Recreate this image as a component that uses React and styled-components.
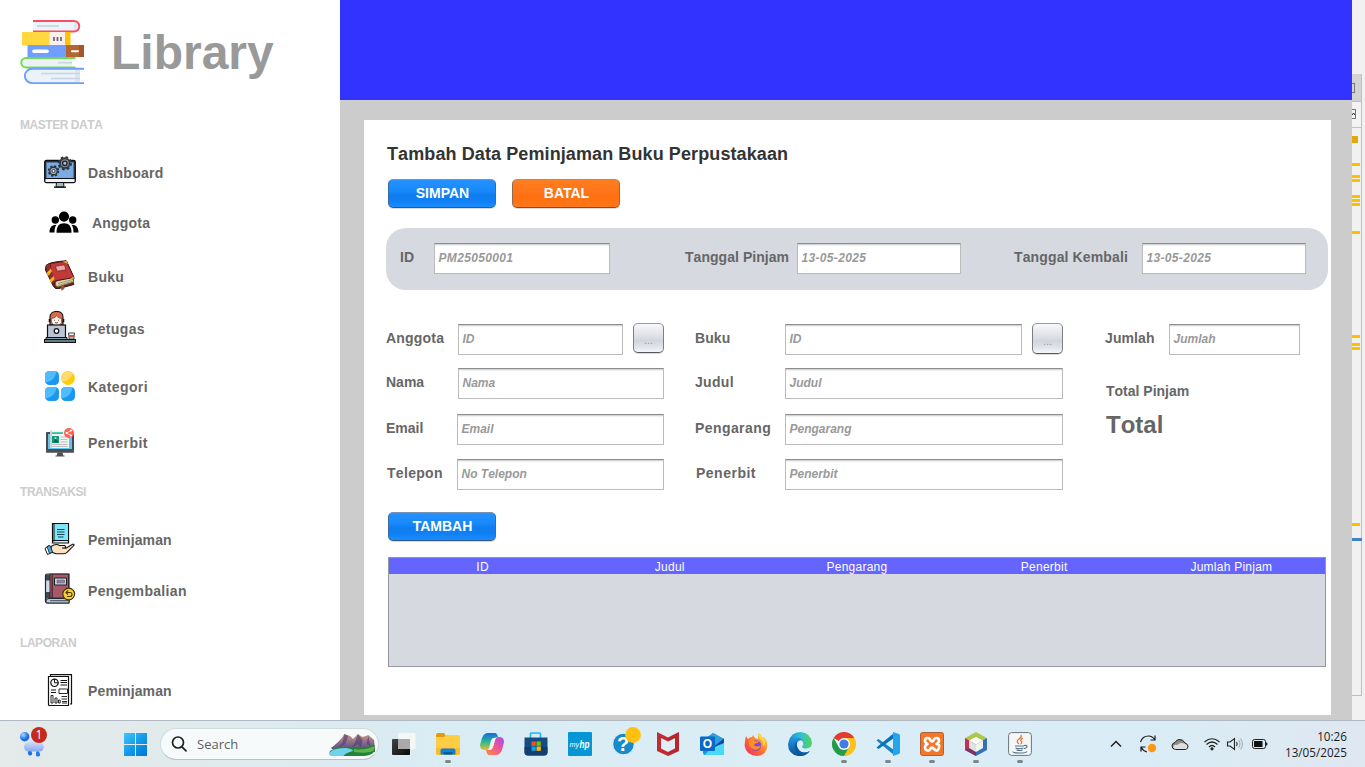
import React from "react";
import styled, { createGlobalStyle } from "styled-components";

const GlobalStyle = createGlobalStyle`
  *, *::before, *::after { box-sizing: border-box; }
  html, body { margin: 0; padding: 0; overflow: hidden; }
  body { font-family: "Liberation Sans", Arial, sans-serif; font-kerning: none; background: #fff; }
  svg { display: block; flex: none; }
`;

/* ---------- shell ---------- */

const Desktop = styled.div`
  display: flex;
  flex-direction: column;
  width: 1365px;
  height: 767px;
  overflow: hidden;
`;

const Workspace = styled.div`
  display: flex;
  height: 720px;
  overflow: hidden;
`;

/* ---------- sidebar ---------- */

const Sidebar = styled.nav`
  width: 340px;
  height: 720px;
  flex: none;
  overflow: hidden;
  padding: 20px 0 0 20px;
  background: #fff;
`;

const Brand = styled.div`
  display: flex;
  align-items: center;
  height: 64px;
  gap: 27px;
`;

const BrandName = styled.h1`
  margin: 0;
  padding-top: 2px;
  font-size: 48px;
  line-height: 64px;
  font-weight: bold;
  color: #999;
`;

const SectionLabel = styled.h2`
  margin: ${(p) => p.$top}px 0 0;
  height: 14px;
  font-size: 12px;
  line-height: 14px;
  font-weight: bold;
  letter-spacing: -0.45px;
  color: #ccc;
`;

const MenuItem = styled.a`
  display: flex;
  align-items: center;
  gap: 12px;
  height: 32px;
  margin-top: ${(p) => p.$top}px;
  padding-left: 24px;
`;

const IconSlot = styled.span`
  flex: none;
  margin-bottom: ${(p) => (p.$lift || 0) * 2}px;
`;

const MenuText = styled.span`
  font-size: 14px;
  line-height: 16px;
  font-weight: bold;
  letter-spacing: ${(p) => p.$ls}px;
  color: #666;
`;

/* ---------- main ---------- */

const Main = styled.main`
  display: flex;
  flex-direction: column;
  width: 1012px;
  flex: none;
  background: #ccc;
`;

const Banner = styled.header`
  height: 100px;
  flex: none;
  background: #33f;
`;

const Card = styled.section`
  height: 595px;
  margin: 20px 21px 5px 24px;
  padding: 24px 3px 0 22px;
  background: #fff;
`;

const Title = styled.h2`
  margin: 0 0 15px 1px;
  font-size: 18px;
  line-height: 20px;
  font-weight: bold;
  letter-spacing: 0.1px;
  color: #333;
`;

const ButtonRow = styled.div`
  display: flex;
  gap: 16px;
  padding-left: 2px;
`;

const tones = {
  blue: "linear-gradient(#2691ff 0%, #1789fb 40%, #0e7df0 55%, #0f7ff3 75%, #1a8dff 100%)",
  orange: "linear-gradient(#ff7d20 0%, #ff7519 45%, #ff7010 60%, #ff7719 100%)",
  silver: "linear-gradient(#f7f8fa 0%, #e3e5ea 35%, #d2d5dc 60%, #dfe2e8 80%, #f4f6fa 100%)",
};

const Button = styled.button`
  width: ${(p) => p.$w || 108}px;
  height: ${(p) => p.$h || 29}px;
  flex: none;
  margin: 0;
  padding: ${(p) => p.$pad || "0 0 1px 1px"};
  border: 1px solid;
  border-color: ${(p) =>
    p.$tone === "silver" ? "#9b9da3 #7b7f88 #545962" : p.$tone === "blue" ? "#7794b5 #356ca5 #315982" : "#a58f80 #96694b #665447"};
  border-radius: 5px;
  box-shadow: 0 1px 0 rgba(0, 0, 0, 0.15);
  background: ${(p) => tones[p.$tone]};
  font: bold 14px/16px "Liberation Sans", Arial, sans-serif;
  color: #fff;
`;

const LookupButton = styled(Button)`
  font-size: 11px;
  font-weight: normal;
  line-height: 12px;
  color: #a3979d;
`;

const LoanPanel = styled.div`
  display: flex;
  align-items: flex-start;
  width: 942px;
  height: 62px;
  margin-top: 20px;
  padding: 15px 0 0 14px;
  border-radius: 20px;
  background: #d6d9e0;
`;

const Label = styled.label`
  width: ${(p) => p.$w}px;
  flex: none;
  padding-left: ${(p) => p.$indent || 0}px;
  font-size: 14px;
  line-height: 28px;
  font-weight: bold;
  letter-spacing: ${(p) => p.$ls ?? 0.1}px;
  white-space: nowrap;
  color: #666;
`;

const Input = styled.div`
  width: ${(p) => p.$w}px;
  height: 31px;
  flex: none;
  margin-right: ${(p) => p.$after || 0}px;
  padding: 0 0 0 3.5px;
  border: 1px solid #bbb;
  border-top-color: #8b8c8e;
  box-shadow: inset 0 1px 0 #d5d5d5, inset 0 2px 0 #f0f0f0;
  background: #fff;
  font-size: 12px;
  line-height: 28px;
  font-weight: bold;
  font-style: italic;
  letter-spacing: ${(p) => (p.$numeric ? 0.33 : 0)}px;
  color: #999;
`;

const Form = styled.div`
  display: flex;
  height: 188px;
  margin-top: 34px;
`;

const Column = styled.div`
  width: ${(p) => p.$w}px;
  flex: none;
`;

const Row = styled.div`
  display: flex;
  align-items: flex-start;
  height: 31px;
  margin-bottom: ${(p) => p.$gap || 0}px;
`;

const LookupSlot = styled.div`
  height: 33px;
  margin: -1px 0 0 10px;
`;

const TotalLabel = styled.div`
  margin: 20px 0 0 1px;
  font-size: 14px;
  line-height: 32px;
  font-weight: bold;
  color: #666;
`;

const TotalValue = styled.div`
  margin: 1px 0 0 1px;
  font-size: 24px;
  line-height: 34px;
  font-weight: bold;
  color: #666;
`;

const Table = styled.div`
  width: 938px;
  height: 110px;
  margin: 16px 0 0 2px;
  border: 1px solid #9297a1;
  background: #d6d9e0;
`;

const TableHead = styled.div`
  display: grid;
  grid-template-columns: repeat(5, 1fr);
  height: 16px;
  background: #6464ff;
`;

const HeadCell = styled.div`
  font-size: 12px;
  line-height: 18px;
  letter-spacing: 0.25px;
  text-align: center;
  color: #fff;
`;

/* ---------- background editor edge ---------- */

const EditorEdge = styled.aside`
  width: 13px;
  flex: none;
  padding-top: 74px;
  background: #f1f1f1;
`;

const Ruler = styled.div`
  display: flex;
  flex-direction: column;
  width: 10px;
  height: 622px;
  border-right: 1px solid #bfbfbf;
  border-bottom: 1px solid #bfbfbf;
`;

const RulerCap = styled.div`
  flex: none;
  height: ${(p) => p.$h}px;
  padding-top: ${(p) => p.$pad}px;
  border-bottom: 1px solid #bfbfbf;
  background: ${(p) => p.$bg};
`;

const Knob = styled.div`
  display: flex;
  align-items: center;
  width: ${(p) => p.$w}px;
  height: 10px;
  border: 1px solid #777;
  border-left: 0;
`;

const Mark = styled.div`
  flex: none;
  width: ${(p) => p.$w || 8}px;
  height: ${(p) => p.$h || 3}px;
  margin-top: ${(p) => p.$top}px;
  background: ${(p) => p.$c || "#ffbf00"};
`;

/* ---------- taskbar ---------- */

const Taskbar = styled.footer`
  display: flex;
  height: 47px;
  flex: none;
  border-top: 1px solid #afbac4;
  background: linear-gradient(90deg, #e5eaea 0%, #e0eaec 15%, #d9ebf3 30%, #dbedf5 60%, #d9ecf5 85%, #dfe7f1 100%);
`;

const Widget = styled.div`
  width: 124px;
  padding: 5px 0 0 18px;
`;

const StartSlot = styled.div`
  width: 36px;
  padding-top: 12px;
`;

const SearchBox = styled.div`
  display: flex;
  align-items: center;
  width: 219px;
  height: 32px;
  margin: 7px 3px 0 0;
  padding-left: 10px;
  border: 1px solid #cfdadd;
  border-bottom-color: #b5c1c5;
  border-radius: 16px;
  background: #f7fafa;
  overflow: hidden;
`;

const SearchText = styled.span`
  width: 142px;
  padding-left: 10px;
  font-family: "Open Sans", "Noto Sans", sans-serif;
  font-size: 13px;
  line-height: 18px;
  color: #5c5f60;
`;

const AppSlot = styled.div`
  display: flex;
  flex-direction: column;
  align-items: center;
  width: 44px;
  padding-top: 11px;
`;

const Running = styled.div`
  width: 6px;
  height: 3px;
  margin-top: 4px;
  border-radius: 2px;
  background: #7d868b;
`;

const Tray = styled.div`
  display: flex;
  align-items: flex-start;
  flex: 1;
  padding: 11px 18px 0 62px;
`;

const TraySlot = styled.div`
  display: flex;
  justify-content: center;
  width: ${(p) => p.$w}px;
  flex: none;
`;

const Clock = styled.div`
  flex: 1;
  margin-top: -4px;
  font-family: "Open Sans", "Noto Sans", sans-serif;
  font-size: 11.7px;
  line-height: 16px;
  text-align: right;
  white-space: nowrap;
  color: #1b1b1b;
`;

/* ---------- sidebar drawings ---------- */

const BooksLogo = () => (
  <svg width="64" height="64" viewBox="0 0 64 64">
    <path d="M13 1H54a5 5 0 0 1 0 10.500H13" fill="#eef3f8" stroke="#ff4b62" strokeWidth="1.900" />
    <path d="M17 6H39" stroke="#c5d5e2" strokeWidth="1.800" />
    <path d="M54 2.500a4 4 0 0 1 0 7.500" fill="#d9e5ef" />
    <rect x="2" y="12" width="28" height="13.500" fill="#ffd840" />
    <rect x="29.500" y="12" width="16" height="13.500" fill="#fbefee" />
    <rect x="45" y="12" width="5.500" height="13.500" fill="#fcc400" />
    <path d="M34 17v4M37.500 17v4M41 17v4" stroke="#5c6578" strokeWidth="1.700" />
    <rect x="7.500" y="25" width="39" height="12" fill="#709eff" />
    <path d="M14 31.200H27" stroke="#fff" strokeWidth="3.600" strokeLinecap="round" />
    <rect x="46" y="25" width="18" height="12" fill="#b5652f" />
    <rect x="59" y="25" width="5" height="12" fill="#a3582a" />
    <path d="M52 31.200H58" stroke="#fff" strokeWidth="2" strokeLinecap="round" />
    <path d="M52 38H6a4.700 4.700 0 0 0 0 9.500H52z" fill="#edf2f7" />
    <path d="M55.500 38H6a4.700 4.700 0 0 0 0 9.500H55.500" fill="none" stroke="#6fdb50" strokeWidth="1.900" />
    <path d="M38 42.700H52" stroke="#c5d5e2" strokeWidth="1.700" />
    <path d="M60 49H12a7 7 0 0 0 0 14H60z" fill="#edf2f7" />
    <path d="M55 50h5v12h-5z" fill="#dce6ef" />
    <path d="M64 48.800H12a7.100 7.100 0 0 0 0 14.300H64" fill="none" stroke="#6f9dff" strokeWidth="1.900" />
    <path d="M21 53.500H60M31 58.500H60" stroke="#c5d5e2" strokeWidth="1.700" />
  </svg>
);

const DashboardIcon = () => (
  <svg width="32" height="32" viewBox="0 0 32 32">
    <rect x="0.700" y="4.500" width="30.600" height="22" rx="1.500" fill="#2d4352" stroke="#111" strokeWidth="1.300" />
    <rect x="2.500" y="6.500" width="27" height="15.500" fill="#7cabe4" />
    <path d="M1.500 22.500h29v3.500h-29z" fill="#edf3f7" />
    <path d="M1 22.500h30" stroke="#111" />
    <path d="M12.500 26.500h7l.500 4.500h-8z" fill="#a9bac6" stroke="#111" />
    <path d="M10 31.200h12" stroke="#111" strokeWidth="1.300" />
    <circle cx="9.500" cy="15" r="4.900" fill="#6a7c8a" stroke="#28343c" strokeWidth="1.700" strokeDasharray="2.100 1.750" />
    <circle cx="9.500" cy="15" r="3.700" fill="#a4b6c4" stroke="#28343c" strokeWidth="1.200" />
    <circle cx="9.500" cy="15" r="1.600" fill="#d2e6f4" stroke="#28343c" strokeWidth=".9" />
    <circle cx="20.800" cy="7.300" r="6.200" fill="#63717b" stroke="#28323a" strokeWidth="1.900" strokeDasharray="2.500 2.370" />
    <circle cx="20.800" cy="7.300" r="4.700" fill="#84919a" stroke="#28323a" strokeWidth="1.300" />
    <circle cx="20.800" cy="7.300" r="2.200" fill="#b4bfc7" stroke="#1c242a" strokeWidth="1.300" />
  </svg>
);

const MembersIcon = () => (
  <svg width="36" height="32" viewBox="-4 0 36 32">
    <circle cx="16" cy="9.600" r="5.100" />
    <circle cx="7.300" cy="13" r="3.700" />
    <circle cx="24.700" cy="13" r="3.700" />
    <path d="M8.500 25.800c0-6.500 2.500-9.500 7.500-9.500s7.500 3 7.500 9.500z" />
    <path d="M1.500 25.500c0-5 2-7.800 7-7.800-1.500 2-2 4.500-2 7.800zM30.500 25.500c0-5-2-7.800-7-7.800 1.500 2 2 4.500 2 7.800z" />
  </svg>
);

const BookIcon = () => (
  <svg width="32" height="32" viewBox="0 0 32 32">
    <path d="M2 5.500Q5 2 22 .800L30 18l-1 3.500.800 3L15 28.500q-4 1.500-6-3L1.500 10z" fill="#702020" stroke="#3a1515" />
    <path d="M12 21l17-4 .500 5-15.500 5q-4-1-2-6z" fill="#dcd2aa" stroke="#6e5c3a" />
    <path d="M14 23.500l15-4M14 25.500l14-4" stroke="#8c8057" strokeWidth=".7" />
    <path d="M6 3.500L22.500 1 30 17.500l-17 3q-3 0-3.500 4z" fill="#c13a3a" stroke="#4b1818" />
    <path d="M2 6q1-2 4-2l3.500 20Q6 21 2 6z" fill="#992d2d" />
    <path d="M2.500 13l4.500-4.500 1 3-4 4.500zM5.500 20l4-4 1 3-3.500 4zM18.500 1.500L22.500 1l1.700 3zM29.500 16.500l.500 2-4 .500z" fill="#f0b41d" />
    <path d="M11.500 6.300l9-1.500 1.500 5-9 1.500z" fill="#eea6a6" stroke="#702020" strokeWidth=".7" />
    <path d="M17 26l2.500-.500 1 3-3 2.500z" fill="#9c5326" />
  </svg>
);

const StaffIcon = () => (
  <svg width="32" height="32" viewBox="0 0 32 32">
    <path d="M6 14V6.500C6 2.500 8.800.500 12.500.500s6.500 2 6.500 6V14z" fill="#dc6a4e" stroke="#111" strokeWidth="1.100" />
    <path d="M7.500 7.500Q12 7 12.500 4.500 14 7.500 17.500 7.500v4q-1.500 3.500-5 3.500T7.500 11z" fill="#fff1e8" stroke="#5a3a32" strokeWidth=".6" />
    <path d="M5.500 8v3.200M19.500 8v3.200" stroke="#111" strokeWidth="1.600" />
    <path d="M10.500 8.800v.8M14.500 8.800v.8M11 11.500q1.500 1 3 0" stroke="#3a2019" strokeWidth=".8" fill="none" />
    <rect x="3.500" y="14" width="18" height="13" fill="#bac4d4" stroke="#111" strokeWidth="1.200" />
    <circle cx="12.500" cy="20" r="2.300" fill="#fff" stroke="#111" strokeWidth="1.200" />
    <path d="M2 26.500h21v2H2z" fill="#8d9cac" stroke="#111" />
    <path d="M24.500 22h6l-.700 6h-4.600z" fill="#f5f5f5" stroke="#444" />
    <path d="M25 24h5v2.500h-5z" fill="#bf5848" />
    <rect x=".500" y="28.500" width="31" height="3" fill="#5a8084" stroke="#111" />
  </svg>
);

const CategoryIcon = () => (
  <svg width="32" height="32" viewBox="0 0 32 32">
    {[[1, 0], [1, 16], [17, 16]].map(([x, y]) => (
      <g key={`${x}-${y}`} transform={`translate(${x} ${y})`}>
        <rect width="14" height="14" rx="4.500" fill="#1a98ef" />
        <path d="M4.500 0H11.500C11 5.500 7 11 .300 11.500Q0 11 0 9.500V4.500Q0 0 4.500 0z" fill="#50bbff" />
      </g>
    ))}
    <circle cx="24" cy="7" r="6.900" fill="#ffcd08" />
    <path d="M29 2.300C27 7.500 24 10 18 10.500 16 7 17.500 2 22 .400q4.500-1 7 1.900z" fill="#ffda6c" />
  </svg>
);

const PublisherIcon = () => (
  <svg width="32" height="32" viewBox="0 0 32 32">
    <rect x="2" y="5" width="28" height="20.500" rx="1" fill="#454a50" />
    <rect x="4" y="7" width="24" height="15" fill="#61c4ec" />
    <path d="M6 3.500h19V21H6z" fill="#f4f2f0" />
    <path d="M6 3.500h2V21H6z" fill="#d1d1d1" />
    <path d="M8 5.200h11v1.800H8z" fill="#35bda4" />
    <path d="M8 9h7v7H8z" fill="#0d9d80" />
    <path d="M9 15.500l2.500-3.500 3.500 3.500z" fill="#06604f" />
    <circle cx="11.500" cy="11" r="1" fill="#ffd33b" />
    <path d="M16.500 10h7M16.500 12.500h7M16.500 15h7M8 17.500h15.500M8 19.500h15.500" stroke="#bbb" strokeWidth=".9" />
    <path d="M2 22h28v3.500H2z" fill="#4c5055" />
    <path d="M13.500 25.500h5l1 4h-7zM11.500 28.500h9v1h-9z" fill="#4c5055" />
    <circle cx="25" cy="6" r="5" fill="#ff6252" />
    <path d="M27 3.500l-4.500 2.500L27 8.500" fill="none" stroke="#fff" strokeWidth=".8" />
    <path d="M27 3.500h.01M22.500 6h.01M27 8.500h.01" stroke="#fff" strokeWidth="2" strokeLinecap="round" />
  </svg>
);

const LendIcon = () => (
  <svg width="32" height="32" viewBox="0 0 32 32">
    <path d="M8.500 .600h16v19.400h-16z" fill="#cdeff5" stroke="#111" strokeWidth="1.200" />
    <path d="M10 1.200h14V17H10z" fill="#7ce7fa" />
    <path d="M10 .600v18M8.500 17.500h16" stroke="#111" />
    <path d="M13 6.500h7.500M13 9h7.500M13 11.500h7.500M14 14h5.500" stroke="#17414a" strokeWidth="1.100" />
    <path d="M7 23.500q5-3.500 8.500-1h5q2 1 .500 2.500h-3l4 .300 6.500-4q2-.500 1.500 1l-7 7q-1 1.500-4 1.500H12l-4-1.500z" fill="#fee0c2" stroke="#17110d" strokeWidth="1.100" />
    <path d="M1 25.500l4-3 3 7-4.500 2z" fill="#fff" stroke="#111" />
    <path d="M3 23.500l3-1 2.500 6.500-3 1.500z" fill="#42aee8" stroke="#143044" strokeWidth=".9" />
  </svg>
);

const ReturnIcon = () => (
  <svg width="32" height="32" viewBox="0 0 32 32">
    <path d="M1.500 2.500q0-1.500 2-1.500h21.500v29H3.500q-2 0-2-2z" fill="#d2d8e8" stroke="#202833" strokeWidth="1.200" />
    <path d="M2 1.500h4v6H2zM2 19h4v6.500H2z" fill="#374a50" />
    <path d="M6 1.200h18.500V25H6z" fill="#a65a68" stroke="#341d26" strokeWidth=".9" />
    <path d="M8.200 1v24" stroke="#432530" strokeWidth="1.200" />
    <path d="M10.500 5h12v7h-12z" fill="#c5d2e8" stroke="#201c24" />
    <path d="M13 7h7.500v3H13z" fill="#91859d" stroke="#55505f" strokeWidth=".5" />
    <path d="M2 28.500q-.500-3 3-3h20v4.500H4q-2 0-2-1.500z" fill="#bcc7dc" stroke="#202833" />
    <path d="M6 27.700h19" stroke="#444e5c" />
    <circle cx="24.700" cy="21" r="5.900" fill="#f8ce30" stroke="#353114" strokeWidth="1.100" />
    <path d="M22 19.500h4q2 0 2 2t-2 2h-3M24 17.500l-2 2 2 2" fill="none" stroke="#4b3b0c" strokeWidth="1.100" />
  </svg>
);

const ReportIcon = () => (
  <svg width="32" height="32" viewBox="0 0 32 32" fill="none" stroke="#111" strokeWidth="1.200">
    <path d="M6.500 2V.600h21V30H26" />
    <path d="M4.500 2.500h20v29h-19q-1 0-1-1z" fill="#fff" />
    <circle cx="10.500" cy="8.800" r="3.700" />
    <path d="M10.500 5.300v3.500h4M16.500 6.500h6.500M16.500 8.500h6.500M16.500 11h6.500M7 16h5M7 18.500h5" strokeWidth="1" />
    <path d="M15 15h8.500v4.500H15zM7 21.500v7.500h2v-7.500zM11 24v5h2v-5zM14.500 26v3h1.700v-3zM17.500 22.500H23M17.500 25H23M18 27.500H23M18 29H23" strokeWidth=".9" />
  </svg>
);

const masterMenu = [
  { text: "Dashboard", Icon: DashboardIcon, top: 25, lift: 1, ls: 0.28 },
  { text: "Anggota", Icon: MembersIcon, top: 18, ls: 0.2 },
  { text: "Buku", Icon: BookIcon, top: 22, lift: 1, ls: 0.3 },
  { text: "Petugas", Icon: StaffIcon, top: 20, lift: 2, ls: 0.35 },
  { text: "Kategori", Icon: CategoryIcon, top: 26, ls: 0.4 },
  { text: "Penerbit", Icon: PublisherIcon, top: 24, ls: 0.5 },
];

const transactionMenu = [
  { text: "Peminjaman", Icon: LendIcon, top: 25, lift: 1, ls: 0.13 },
  { text: "Pengembalian", Icon: ReturnIcon, top: 19, lift: 2, ls: 0.32 },
];

const reportMenu = [{ text: "Peminjaman", Icon: ReportIcon, top: 25, lift: 1, ls: 0.13 }];

const Menu = ({ items }) =>
  items.map(({ text, Icon, top, lift, ls }) => (
    <MenuItem key={text} $top={top}>
      <IconSlot $lift={lift}>
        <Icon />
      </IconSlot>
      <MenuText $ls={ls}>{text}</MenuText>
    </MenuItem>
  ));

/* ---------- taskbar drawings ---------- */

const WeatherIcon = () => (
  <svg width="30" height="38" viewBox="0 0 30 38">
    <defs>
      <radialGradient id="drop" cx=".35" cy=".3"><stop stopColor="#a7d9ff" /><stop offset="1" stopColor="#176ee6" /></radialGradient>
      <linearGradient id="cloud" x2="0" y2="1"><stop stopColor="#e4ecff" /><stop offset="1" stopColor="#86a8ea" /></linearGradient>
    </defs>
    <circle cx="6.700" cy="10.700" r="4.700" fill="url(#drop)" />
    <path d="M11.500 22.500q-2.500 3.500-1.200 6 2.700 1.500 4-.800 0-2.500-2.800-5.200zM19.500 24q-2.500 3.500-1.300 6 2.700 1.500 4-.800 0-2.500-2.700-5.200z" fill="#2179ed" />
    <path d="M10 25.500a4.600 4.600 0 0 1-.500-9Q12.500 12 18 13.500q5-1 6 4 2.500 1.500 1.500 5t-4.500 3z" fill="url(#cloud)" />
    <path d="M12 25q-2 2.500-1.200 4.300 2 .800 3-.500 0-1.800-1.800-3.800z" fill="#1c6fe6" />
    <circle cx="21" cy="9" r="8" fill="#c42b1c" />
    <text x="21" y="13.300" textAnchor="middle" fontFamily="Open Sans" fontSize="12" fill="#fff">1</text>
  </svg>
);

const WindowsIcon = () => (
  <svg width="23" height="23" viewBox="0 0 23 23">
    <defs><linearGradient id="win" x2="1" y2="1"><stop stopColor="#48c5f8" /><stop offset=".5" stopColor="#129bea" /><stop offset="1" stopColor="#0074d1" /></linearGradient></defs>
    <path d="M0 0h11v11H0zM12 0h11v11H12zM0 12h11v11H0zM12 12h11v11H12z" fill="url(#win)" />
  </svg>
);

const SearchIcon = () => (
  <svg width="16" height="16" viewBox="0 0 16 16" fill="none" stroke="#202020" strokeWidth="1.700" strokeLinecap="round">
    <circle cx="7" cy="6.500" r="5.500" />
    <path d="M11 10.800l4 4" />
  </svg>
);

const MountainArt = () => (
  <svg width="48" height="24" viewBox="0 0 50 24" preserveAspectRatio="none">
    <defs><linearGradient id="mt" x2="0" y2="1"><stop stopColor="#d09b8b" /><stop offset=".6" stopColor="#776087" /><stop offset="1" stopColor="#4a527c" /></linearGradient></defs>
    <path d="M2 16Q12 9 16 2l6 2 3 3 5-5 5 3 6-2 6 5 1 12H8z" fill="url(#mt)" />
    <path d="M16 2l-2 9-5 5 8-4 3-8zM30 2l-3 9-4 5 7-4 3 4 2-8zM41 4l-2 8 4 2z" fill="#4d426d" opacity=".65" />
    <path d="M1 19q9-5 22-4 10 2 25-2l-1 7q-4 4-12 4H6Q-1 23 1 19z" fill="#23833b" />
    <path d="M0 22q2-6 17-6 8 1 8 3-8 2-10 5H4q-4 0-4-2z" fill="#6fd3ed" />
    <path d="M26 17q10 2 22-3l-2 5q-6 3-20 1z" fill="#5eb447" />
  </svg>
);

const TaskViewIcon = () => (
  <svg width="24" height="24" viewBox="0 0 24 24">
    <defs><linearGradient id="tv" x2="1" y2="1"><stop stopColor="#444" /><stop offset="1" stopColor="#080808" /></linearGradient></defs>
    <rect y="7" width="18" height="16" rx="1" fill="url(#tv)" />
    <rect x="6" y="1" width="17.500" height="16" rx="1" fill="#f5f6f6" />
    <path d="M6 7h12v10H7q-1 0-1-1z" fill="#aaa" />
  </svg>
);

const FolderIcon = () => (
  <svg width="24" height="24" viewBox="0 0 24 24">
    <path d="M0 3q0-2 2-2h6l2 3v5H0z" fill="#dc9c0d" />
    <path d="M0 5h8l2-2h12q2 0 2 2v16q0 2-2 2H2q-2 0-2-2z" fill="#ffcd43" />
    <path d="M0 16h24v5q0 2-2 2H2q-2 0-2-2z" fill="#f6bd2d" />
    <path d="M4.500 22.500v-4q0-2 2-2h11q2 0 2 2v4z" fill="#1380d2" />
    <path d="M7.500 20h9v2.500h-9z" fill="#075ca5" />
  </svg>
);

const CopilotIcon = () => (
  <svg width="24" height="24" viewBox="0 0 24 24">
    <defs>
      <linearGradient id="cp1" x2="0" y2="1"><stop stopColor="#126bdf" /><stop offset=".55" stopColor="#30bd8a" /><stop offset="1" stopColor="#f3bb27" /></linearGradient>
      <linearGradient id="cp2" x1="1" x2="0" y2="1"><stop stopColor="#a54aed" /><stop offset=".5" stopColor="#ed5a91" /><stop offset="1" stopColor="#ff8c38" /></linearGradient>
    </defs>
    <path d="M8 1h7q2 0 3 4l-4 1q-2 0-3 3L9 16q-1 3-4 2-5 0-5-5L2 6q2-5 6-5z" fill="url(#cp1)" />
    <path d="M16 23H9q-2 0-3-5h4q2 0 3-3l2-7q1-3 4-3 5 0 5 5l-2 8q-2 5-6 5z" fill="url(#cp2)" />
    <path d="M14 6q-2 0-3 3l-1 5q0 3-2 4h2q2 0 3-3l2-7q1-2 1-2z" fill="#eff1f7" />
  </svg>
);

const StoreIcon = () => (
  <svg width="24" height="24" viewBox="0 0 24 24">
    <path d="M6.500 7V2q0-1 1-1h8q1 0 1 1v5" fill="none" stroke="#22b8ec" strokeWidth="1.700" />
    <path d="M.500 5.500h23V20q0 3.500-3.500 3.500H4Q.500 23.500.500 20z" fill="#164c84" />
    <path d="M.500 15h23v5q0 3.500-3.500 3.500H4Q.500 23.500.500 20z" fill="#123d71" />
    <path d="M7.500 9.500h4.300v4.300H7.500z" fill="#f35325" /><path d="M12.500 9.500h4.300v4.300h-4.300z" fill="#81bc06" />
    <path d="M7.500 14.500h4.300v4.300H7.500z" fill="#05a6f0" /><path d="M12.500 14.500h4.300v4.300h-4.300z" fill="#ffba08" />
  </svg>
);

const MyHpIcon = () => (
  <svg width="24" height="24" viewBox="0 0 24 24">
    <rect width="24" height="24" rx="1" fill="#0796d5" />
    <text x="1.500" y="14.500" fontFamily="Liberation Sans" fontStyle="italic" fontSize="8" textLength="9.500" lengthAdjust="spacingAndGlyphs" fill="#fff">my</text>
    <text x="11.500" y="15.500" fontFamily="Liberation Sans" fontStyle="italic" fontWeight="bold" fontSize="11" textLength="10" lengthAdjust="spacingAndGlyphs" fill="#fff">hp</text>
  </svg>
);

const HelpSlot = styled.span`
  margin: -5px 0 0 4px;
`;

const HelpIcon = () => (
  <HelpSlot>
    <svg width="30" height="29" viewBox="0 0 30 29">
      <circle cx="12.500" cy="17" r="10.800" fill="#168acb" stroke="#e9f3f8" />
      <text x="12" y="24" textAnchor="middle" fontFamily="Liberation Sans" fontWeight="bold" fontSize="20" fill="#fff">?</text>
      <circle cx="22" cy="8" r="7.900" fill="#ffc10d" />
    </svg>
  </HelpSlot>
);

const ShieldIcon = () => (
  <svg width="24" height="24" viewBox="0 0 24 24">
    <path d="M1 0l11 5.500L23 0v19l-11 5-11-5z" fill="#c02c31" />
    <path d="M5 6l7 3.500L19 6v10.500L12 20l-7-3.500z" fill="#e2eef4" />
    <path d="M23 0v19l-11 5v-4l7-3.500V6l-7 3.500v-4z" fill="#a51f29" opacity=".35" />
  </svg>
);

const OutlookIcon = () => (
  <svg width="24" height="24" viewBox="0 0 24 24">
    <path d="M3 8l10-7 11 6v15q0 1-1 1H5q-2 0-2-2z" fill="#149add" />
    <path d="M13 1l11 6-11 8-8-6z" fill="#2f9fe0" />
    <path d="M12 16L24 6.500v5l-12 8z" fill="#104c9a" />
    <path d="M5 23q3-6 19-12v11q0 1-1 1z" fill="#49d8f5" />
    <path d="M1 4.500h13q1 0 1 1v12.500q0 1-1 1H1q-1 0-1-1V5.500q0-1 1-1z" fill="#0869c8" />
    <text x="7.300" y="16.300" textAnchor="middle" fontFamily="Liberation Sans" fontWeight="bold" fontSize="12" fill="#fff">O</text>
  </svg>
);

const FirefoxIcon = () => (
  <svg width="24" height="24" viewBox="0 0 24 24">
    <defs><linearGradient id="ff" x1="1" x2="0" y2="1"><stop stopColor="#ffe04c" /><stop offset=".5" stopColor="#ff762e" /><stop offset="1" stopColor="#ed216b" /></linearGradient></defs>
    <path d="M2 4l2 3q2-2 4-2l1-2 2 3 3 1V1q3 1 4 5l2-1q4 4 3 11-2 8-10 8Q2 23 .700 14 .500 9 2 4z" fill="url(#ff)" />
    <circle cx="12" cy="13.500" r="5.200" fill="#8548df" />
    <path d="M5 8q3-2 6 1l4 .500q-1 2-4 2-2 2 1 3 3 0 5-1-2 5-7 4-6-2-5-9.500z" fill="#ff8e25" />
    <path d="M14 1q0 5 4 8 2 3 1 6 4-4 1-10l-2 1q-1-4-4-5z" fill="#ffd83f" />
  </svg>
);

const EdgeIcon = () => (
  <svg width="24" height="24" viewBox="0 0 24 24">
    <defs>
      <linearGradient id="ed" x2="1"><stop stopColor="#188bd3" /><stop offset=".5" stopColor="#32bed0" /><stop offset="1" stopColor="#54d65c" /></linearGradient>
      <linearGradient id="ed2" x2="0" y2="1"><stop stopColor="#2196df" /><stop offset="1" stopColor="#094d93" /></linearGradient>
    </defs>
    <path d="M.500 10Q3 0 12.500 0 23 1 24 11q0 5-6 5.500-4 0-4-2 2-2 1-4-1-4-7-3Q3 7 .500 10z" fill="url(#ed)" />
    <path d="M0 12q1-6 7-6 6-1 8 3-4-2-6 2-2 6 4 9 5 2 9-1-5 6-12 5Q0 22 0 12z" fill="url(#ed2)" />
    <path d="M8 10q-4 8 4 13 6 0 10-4-6 3-10 0-4-4-3-8z" fill="#0a599f" />
  </svg>
);

const ChromeIcon = () => (
  <svg width="24" height="24" viewBox="0 0 24 24">
    <path d="M12 12L1.600 6A12 12 0 0 1 22.400 6z" fill="#e33b2e" />
    <path d="M12 6H22.400A12 12 0 0 1 12 24l5.200-9z" fill="#fbc116" />
    <path d="M17.200 15L12 24A12 12 0 0 1 1.600 6L6.800 15 12 18z" fill="#249b49" />
    <circle cx="12" cy="12" r="6" fill="#fff" /><circle cx="12" cy="12" r="4.600" fill="#3f7de8" />
  </svg>
);

const CodeIcon = () => (
  <svg width="24" height="24" viewBox="0 0 24 24">
    <path d="M.500 8.500L2.500 7 18 18v5z" fill="#1585c9" />
    <path d="M.500 15.500L2.500 17 18 6V1z" fill="#0870b7" />
    <path d="M17 0l6 2q1 .500 1 2v16q0 1.500-1 2l-6 2z" fill="#25a5ea" />
  </svg>
);

const XamppIcon = () => (
  <svg width="24" height="24" viewBox="0 0 24 24">
    <rect x=".500" y=".500" width="23" height="23" rx="2" fill="#f47729" stroke="#ac6139" />
    <path d="M7.500 6Q5 6 5 8.500T7.500 12Q5 13 5 15.500T7.500 18.500 10.500 16.500Q12 15 13.500 16.500T16.500 18.500 19 15.500 16.500 12Q19 11 19 8.500T16.500 6 13.500 8.500Q12 10 10.500 8.500 10 6 7.500 6z" fill="none" stroke="#fff" strokeWidth="2.600" strokeLinejoin="round" />
  </svg>
);

const NetBeansIcon = () => (
  <svg width="24" height="24" viewBox="0 0 24 24">
    <path d="M12 0l11 6-11 6L1 6z" fill="#adc84b" />
    <path d="M1 6l11 6v12L1 18z" fill="#c52e55" />
    <path d="M23 6v12l-11 6V12z" fill="#3472b7" />
    <path d="M1 18l4-2 7 4v4z" fill="#7d3266" />
    <path d="M12 5l7 3.500-7 4-7-4z" fill="#f8faf5" />
    <path d="M5 8.500l7 4V20l-7-4z" fill="#dde4df" />
    <path d="M19 8.500V16l-7 4v-7.500z" fill="#f1f3ee" />
  </svg>
);

const JavaIcon = () => (
  <svg width="24" height="24" viewBox="0 0 24 24">
    <rect x=".600" y=".600" width="22.800" height="22.800" rx="3" fill="#f5f6f7" stroke="#69747e" />
    <path d="M13 3q1 2-2 4-3.500 2.500 0 5M15 6q-3.500 2-1.500 3.500 1 1.500-1 2.500" fill="none" stroke="#e47632" strokeWidth="1.300" />
    <path d="M7 14h9M7.500 16q4 1.500 8 0M8.500 18q3.500 1 6 0M16 13.500q3-.500 3 1 0 1.500-3 2M5 19.500q-.500 1.500 7 1.500 6 0 7-1.500" fill="none" stroke="#53758f" strokeWidth="1.100" />
  </svg>
);

const apps = [
  { id: "desktops", Icon: TaskViewIcon },
  { id: "files", Icon: FolderIcon, running: true },
  { id: "copilot", Icon: CopilotIcon },
  { id: "store", Icon: StoreIcon },
  { id: "myhp", Icon: MyHpIcon },
  { id: "help", Icon: HelpIcon },
  { id: "shield", Icon: ShieldIcon },
  { id: "outlook", Icon: OutlookIcon },
  { id: "firefox", Icon: FirefoxIcon },
  { id: "edge", Icon: EdgeIcon },
  { id: "chrome", Icon: ChromeIcon, running: true },
  { id: "code", Icon: CodeIcon, running: true },
  { id: "xampp", Icon: XamppIcon, running: true },
  { id: "netbeans", Icon: NetBeansIcon, running: true },
  { id: "java", Icon: JavaIcon, running: true },
];

const ChevronIcon = () => (
  <svg width="24" height="24" viewBox="0 0 24 24" fill="none" stroke="#1b1b1b" strokeWidth="1.400"><path d="M7 14.500l5-5 5 5" /></svg>
);

const SyncIcon = () => (
  <svg width="24" height="24" viewBox="0 0 24 24" fill="none" stroke="#1b1b1b" strokeWidth="1.200">
    <path d="M4.500 10q2-6 8-6 4 0 6.500 4M19 3.500V8h-4.500M5 19.500V15h4.500M5 15q2 4 6 5" />
    <circle cx="16" cy="16" r="4.200" fill="#ff9811" stroke="none" />
  </svg>
);

const CloudIcon = () => (
  <svg width="24" height="24" viewBox="0 0 24 24">
    <path d="M7.500 17.500H17q3-.500 3-3t-3-3.500q-2-4-6-3.500-3 .500-4 3-3 .500-3 3.500t3.500 3.500z" fill="#8b8b8b" stroke="#222" />
    <path d="M5 15q1-3 4-2 4-4 10 0 1 4-2 4H8q-2 0-3-2z" fill="#dfdfdf" />
  </svg>
);

const WifiIcon = () => (
  <svg width="24" height="24" viewBox="0 0 24 24" fill="none" stroke="#222" strokeWidth="1.200">
    <path d="M4.500 10q7.500-6.500 15 0M6.500 12.500q5.500-5 11 0M9 15q3-3 6 0" />
    <circle cx="12" cy="16.800" r="1" fill="#222" />
  </svg>
);

const VolumeIcon = () => (
  <svg width="24" height="24" viewBox="0 0 24 24" fill="none" stroke="#222" strokeWidth="1.100">
    <path d="M4.500 10v4h2.500l4.500 3.500v-11L7 10z" />
    <path d="M13.500 10q1.500 2 0 4" />
    <path d="M15.500 8q3 4 0 8M17.500 6.500q4 5.500 0 11" stroke="#a5b1b7" />
  </svg>
);

const BatteryIcon = () => (
  <svg width="24" height="24" viewBox="0 0 24 24">
    <rect x="4.500" y="7.500" width="13" height="9" rx="2" fill="none" stroke="#222" />
    <rect x="6" y="9" width="8.500" height="6" fill="#111" />
    <path d="M18 10.500h1q1 1.500 0 3h-1z" fill="#222" />
  </svg>
);

/* ---------- page ---------- */

const marks = [
  { top: 8, w: 6, h: 7, c: "#e0a90a" },
  { top: 20 }, { top: 9 }, { top: 1 }, { top: 13 }, { top: 1 }, { top: 1 }, { top: 25 },
  { top: 101 }, { top: 5 }, { top: 1 }, { top: 173 },
  { top: 12, w: 10, c: "#3d82cc" },
];

export default function App() {
  return (
    <Desktop>
      <GlobalStyle />
      <Workspace>
        <Sidebar>
          <Brand>
            <BooksLogo />
            <BrandName>Library</BrandName>
          </Brand>
          <SectionLabel $top={34}>MASTER DATA</SectionLabel>
          <Menu items={masterMenu} />
          <SectionLabel $top={26}>TRANSAKSI</SectionLabel>
          <Menu items={transactionMenu} />
          <SectionLabel $top={29}>LAPORAN</SectionLabel>
          <Menu items={reportMenu} />
        </Sidebar>

        <Main>
          <Banner />
          <Card>
            <Title>Tambah Data Peminjaman Buku Perpustakaan</Title>
            <ButtonRow>
              <Button $tone="blue">SIMPAN</Button>
              <Button $tone="orange">BATAL</Button>
            </ButtonRow>

            <LoanPanel>
              <Label $w={34}>ID</Label>
              <Input $w={176} $after={75} $numeric>PM25050001</Input>
              <Label $w={112} $ls={0.04}>Tanggal Pinjam</Label>
              <Input $w={164} $after={53} $numeric>13-05-2025</Input>
              <Label $w={128} $ls={0.13}>Tanggal Kembali</Label>
              <Input $w={164} $numeric>13-05-2025</Input>
            </LoanPanel>

            <Form>
              <Column $w={309}>
                <Row $gap={13}>
                  <Label $w={72} $ls={0.2}>Anggota</Label>
                  <Input $w={165}>ID</Input>
                  <LookupSlot><LookupButton $tone="silver" $w={31} $h={30} $pad="4px 0 0">...</LookupButton></LookupSlot>
                </Row>
                <Row $gap={15}><Label $w={72} $ls={0}>Nama</Label><Input $w={206}>Nama</Input></Row>
                <Row $gap={14}><Label $w={71} $ls={0}>Email</Label><Input $w={207}>Email</Input></Row>
                <Row><Label $w={71} $indent={1} $ls={0.3}>Telepon</Label><Input $w={207}>No Telepon</Input></Row>
              </Column>
              <Column $w={410}>
                <Row $gap={13}>
                  <Label $w={90}>Buku</Label>
                  <Input $w={237}>ID</Input>
                  <LookupSlot><LookupButton $tone="silver" $w={31} $h={31} $pad="4px 0 0">...</LookupButton></LookupSlot>
                </Row>
                <Row $gap={15}><Label $w={90} $ls={0.3}>Judul</Label><Input $w={278}>Judul</Input></Row>
                <Row $gap={14}><Label $w={90} $ls={0.42}>Pengarang</Label><Input $w={278}>Pengarang</Input></Row>
                <Row><Label $w={90} $indent={1} $ls={0.5}>Penerbit</Label><Input $w={278}>Penerbit</Input></Row>
              </Column>
              <Column $w={195}>
                <Row><Label $w={64}>Jumlah</Label><Input $w={131}>Jumlah</Input></Row>
                <TotalLabel>Total Pinjam</TotalLabel>
                <TotalValue>Total</TotalValue>
              </Column>
            </Form>

            <ButtonRow>
              <Button $tone="blue">TAMBAH</Button>
            </ButtonRow>

            <Table>
              <TableHead>
                {["ID", "Judul", "Pengarang", "Penerbit", "Jumlah Pinjam"].map((name) => (
                  <HeadCell key={name}>{name}</HeadCell>
                ))}
              </TableHead>
            </Table>
          </Card>
        </Main>

        <EditorEdge>
          <Ruler>
            <RulerCap $h={28} $pad={9} $bg="#d3d3d3"><Knob $w={3} /></RulerCap>
            <RulerCap $h={26} $pad={7} $bg="#f3f3f3">
              <Knob $w={4}>
                <svg width="3" height="4" viewBox="0 0 3 4"><path d="M0 3L1.500 1 3 3" stroke="#222" fill="none" /></svg>
              </Knob>
            </RulerCap>
            {marks.map((m, i) => (
              <Mark key={i} $top={m.top} $w={m.w} $h={m.h} $c={m.c} />
            ))}
          </Ruler>
        </EditorEdge>
      </Workspace>

      <Taskbar>
        <Widget><WeatherIcon /></Widget>
        <StartSlot><WindowsIcon /></StartSlot>
        <SearchBox>
          <SearchIcon />
          <SearchText>Search</SearchText>
          <MountainArt />
        </SearchBox>
        {apps.map(({ id, Icon, running }) => (
          <AppSlot key={id}>
            <Icon />
            {running && <Running />}
          </AppSlot>
        ))}
        <Tray>
          <TraySlot $w={24}><ChevronIcon /></TraySlot>
          <TraySlot $w={40}><SyncIcon /></TraySlot>
          <TraySlot $w={24}><CloudIcon /></TraySlot>
          <TraySlot $w={40}><WifiIcon /></TraySlot>
          <TraySlot $w={6}><VolumeIcon /></TraySlot>
          <TraySlot $w={44}><BatteryIcon /></TraySlot>
          <Clock>
            <div>10:26</div>
            <div>13/05/2025</div>
          </Clock>
        </Tray>
      </Taskbar>
    </Desktop>
  );
}
